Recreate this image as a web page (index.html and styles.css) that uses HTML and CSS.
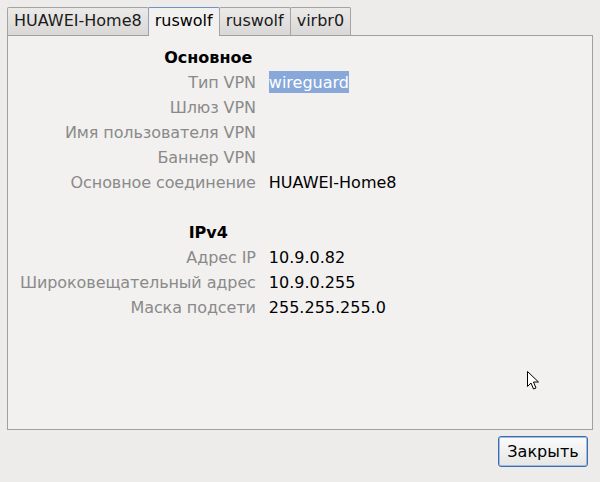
FILE: index.html
```html
<!DOCTYPE html>
<html lang="ru">
<head>
    <meta charset="UTF-8">
    <title>Информация о соединении</title>
    <link rel="stylesheet" href="styles.css">
</head>
<body>

    <div class="window">
        <div class="tabs">
            <div class="tab">HUAWEI-Home8</div>
            <div class="tab active">ruswolf</div>
            <div class="tab">ruswolf</div>
            <div class="tab">virbr0</div>
        </div>

        <div class="panel">
            <div class="info">
                <div class="heading">Основное</div>

                <div class="label">Тип VPN</div>
                <div class="value"><span class="selected">wireguard</span></div>

                <div class="label">Шлюз VPN</div>
                <div class="value"></div>

                <div class="label">Имя пользователя VPN</div>
                <div class="value"></div>

                <div class="label">Баннер VPN</div>
                <div class="value"></div>

                <div class="label">Основное соединение</div>
                <div class="value">HUAWEI-Home8</div>

                <div class="spacer"></div>

                <div class="heading">IPv4</div>

                <div class="label">Адрес IP</div>
                <div class="value">10.9.0.82</div>

                <div class="label">Широковещательный адрес</div>
                <div class="value">10.9.0.255</div>

                <div class="label">Маска подсети</div>
                <div class="value">255.255.255.0</div>
            </div>

            <!-- mouse pointer left in the shot -->
            <svg class="pointer" width="13" height="20" viewBox="0 0 13 20">
                <path d="M0.5 0.5 L0.5 15.5 L4 12 L6.5 18 L9 17 L6.5 11 L11.5 11 Z" fill="#fff" stroke="#000" stroke-width="1" stroke-linejoin="round"/>
            </svg>
        </div>

        <div class="buttons">
            <button class="close">Закрыть</button>
        </div>
    </div>

</body>
</html>
```

FILE: styles.css
```css
body {
    margin: 0;
    background: #edecea;
    font-family: "DejaVu Sans", sans-serif;
    font-size: 16px;
    color: #000;
}

.window {
    padding: 7px 7px 0 7px;
    width: 586px;
}

.tabs {
    display: flex;
    height: 28px;
    position: relative;
    z-index: 1;
}

.tab {
    box-sizing: border-box;
    height: 28px;
    padding: 0 6px;
    line-height: 26px;
    border: 1px solid #a6a4a1;
    border-bottom: none;
    border-radius: 2px 2px 0 0;
    background: linear-gradient(#ebeae8, #d9d8d6);
    margin-right: -1px;
    color: #1a1a1a;
}

.tab.active {
    height: 29px;
    background: #f2f1f0;
    border-color: #8ea4c2;
    border-top-color: #6f93c6;
    color: #000;
}

.panel {
    position: relative;
    box-sizing: border-box;
    height: 395px;
    border: 1px solid #a2a09d;
    background: #f2f1f0;
    padding: 9px 12px 0 12px;
}

.info {
    display: grid;
    grid-template-columns: max-content max-content;
    grid-auto-rows: 25px;
    column-gap: 13px;
    line-height: 25px;
}

.heading {
    grid-column: 1 / 3;
    text-align: center;
    font-weight: bold;
}

.spacer {
    grid-column: 1 / 3;
}

.label {
    text-align: right;
    color: #8a8a8a;
    letter-spacing: -0.1px;
}

.selected {
    background: #88a8da;
    color: #fff;
    padding: 2px 0 1px 0;
}

.pointer {
    position: absolute;
    left: 519px;
    top: 335px;
}

.buttons {
    display: flex;
    justify-content: flex-end;
    padding: 6px 5px 0 0;
}

.close {
    box-sizing: border-box;
    width: 90px;
    height: 31px;
    font-family: "DejaVu Sans", sans-serif;
    font-size: 16px;
    color: #000;
    background: linear-gradient(#fbfbfb, #e6e6e5);
    border: 1px solid #3d6eac;
    border-radius: 3px;
    box-shadow: inset 0 0 0 1px #9fbbe0;
    padding: 0;
}
```
